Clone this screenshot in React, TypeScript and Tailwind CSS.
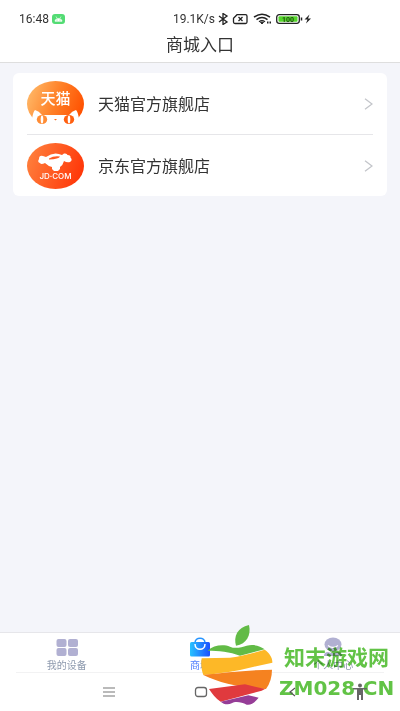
import React from "react";

const cjk = "font-['Noto_Sans','Noto_Sans_CJK_SC',sans-serif]";

function StatusBar() {
  return (
    <div className="flex h-[38px] items-center justify-between pl-[19px] pr-[85px] text-[12px] text-[#333] font-[Roboto,sans-serif]">
      <div className="flex items-center gap-[3px]">
        <span>16:48</span>
        <svg className="h-[10px] w-[13px]" viewBox="0 0 13 10" aria-hidden="true">
          <rect width="13" height="10" rx="3" fill="#53dc74" />
          <path d="M3 7.3C3 3.5 10 3.5 10 7.3ZM4 2.5l1 1.7M9 2.5L8 4.200" fill="#fff" stroke="#fff" strokeWidth=".6" />
          <circle cx="5" cy="5.900" r=".5" fill="#53dc74" />
          <circle cx="8" cy="5.900" r=".5" fill="#53dc74" />
        </svg>
      </div>
      <div className="flex items-center gap-[3px]">
        <span>19.1K/s</span>
        <svg className="h-[12px] w-[97px]" viewBox="0 0 97 12" fill="none" stroke="#222" aria-hidden="true">
          <path d="M1 3l8 6-4 2.500V.5L9 3 1 9" strokeWidth="1.300" />
          <path d="M19 1.700h8.500q1.500 0 1.500 1.500v5.800q0 1.500-1.500 1.500h-10.500q-1.500 0-1.500-1.500V5.200Z" strokeWidth="1.300" />
          <path d="M20.500 4l4 4M24.500 4l-4 4" strokeWidth="1.300" />
          <path d="M36 4.200q8-6 16 0M38.500 6.600q5.500-4 11 0" strokeWidth="1.500" />
          <path d="M41 8.800q3-2.200 6 0" strokeWidth="1.300" />
          <path d="M42.500 9.200h3L44 11Z" fill="#222" />
          <path d="M49 9.500h1.500M51.500 9.500h1.500" strokeWidth="2" />
          <rect x="58.700" y="1.700" width="22.600" height="8.600" rx="2.500" strokeWidth="1.300" />
          <rect x="60.500" y="3.300" width="19" height="5.400" rx="1" fill="#55d62b" stroke="none" />
          <path d="M83.500 4.500v3" strokeWidth="1.500" />
          <text x="70" y="8.700" textAnchor="middle" fontSize="7" fontWeight="700" fill="#205010" stroke="none">100</text>
          <path d="M91.500 1.500l-5 5h3l-1.500 4 5-5h-3Z" fill="#222" stroke="none" />
        </svg>
      </div>
    </div>
  );
}

function TmallLogo() {
  return (
    <svg className="h-[46px] w-[57px] shrink-0" viewBox="0 0 57 46" aria-hidden="true">
      <defs>
        <linearGradient id="tmall" x1="0" x2="1" y1=".3" y2=".6">
          <stop stopColor="#ffb766" />
          <stop offset=".5" stopColor="#ff8027" />
          <stop offset="1" stopColor="#ff5000" />
        </linearGradient>
      </defs>
      <ellipse cx="28.500" cy="23" rx="28.500" ry="23" fill="url(#tmall)" />
      <path d="M5 46V38Q6 31 8 29Q12 30 15 34H42Q45 30 49 29Q51 31 52 38V46Z" fill="#fff" />
      <ellipse cx="15" cy="38.500" rx="5.200" ry="4.500" fill="#ff8c35" />
      <ellipse cx="42" cy="38.500" rx="5.200" ry="4.500" fill="#ff5f10" />
      <ellipse cx="15" cy="38.500" rx="1.300" ry="4" fill="#fff" />
      <ellipse cx="42" cy="38.500" rx="1.300" ry="4" fill="#fff" />
      <path d="M27 38h3l-1.500 1.500Z" fill="#ff6a1a" />
      <text x="28.500" y="23" textAnchor="middle" fontSize="15" fontWeight="500" fill="#fff">天猫</text>
    </svg>
  );
}

function JdLogo() {
  return (
    <svg className="h-[46px] w-[57px] shrink-0" viewBox="0 0 57 46" aria-hidden="true">
      <defs>
        <linearGradient id="jd" x1="0" x2="1" y1=".3" y2=".6">
          <stop stopColor="#ff7f3c" />
          <stop offset="1" stopColor="#ff3608" />
        </linearGradient>
      </defs>
      <ellipse cx="28.500" cy="23" rx="28.500" ry="23" fill="url(#jd)" />
      <path d="M12 16Q12 12 16 13L19 14Q27 8 35 12L37 10.500Q40 10 40.500 12 44 12 43.500 14.500 46 17 43 19 40 20 37 18 36 22 33 24V26L31 28H27L25 26V24Q21 23 18 20 14 22 13 20 10 19 12 16Z" fill="#fff" />
      <path d="M22 15.500Q27 12.500 33 13.500 32 16 22 16.500Z" fill="#ff5b24" />
      <text x="28.500" y="36" textAnchor="middle" fontSize="8" fontWeight="500" fill="#fff" fontFamily="Inter, sans-serif">JD·COM</text>
    </svg>
  );
}

function StoreRow({ logo, name }: { logo: React.ReactNode; name: string }) {
  return (
    <button type="button" className="flex h-[61px] w-full items-center text-left">
      {logo}
      <span className="ml-[14px] flex-1 text-[16px] text-[#333]">{name}</span>
      <svg className="h-[12px] w-[9px]" viewBox="0 0 9 12" fill="none" stroke="#c3c5ca" strokeWidth="1.300" aria-hidden="true">
        <path d="M1 .8L8 6l-7 5.200" />
      </svg>
    </button>
  );
}

function Tab({ icon, label, active }: { icon: React.ReactNode; label: string; active?: boolean }) {
  return (
    <button type="button" className={`flex flex-1 flex-col items-center pt-1 text-[10px] leading-[16px] ${active ? "text-[#4d7cfe]" : "text-[#8e9aae]"}`}>
      {icon}
      {label}
    </button>
  );
}

function Watermark() {
  return (
    <div className="pointer-events-none absolute bottom-0 right-0 flex h-[91px] w-[220px]">
      <svg className="h-[91px] w-[99px] shrink-0" viewBox="0 0 297 273" aria-hidden="true">
        <path d="M168 77C160 50 172 22 207 15 214 45 200 72 168 77Z" fill="#62bb46" />
        <path d="M83 92C100 75 130 72 150 80 165 87 185 82 200 77 222 72 242 78 254 88L180 107C150 95 115 92 83 92Z" fill="#62bb46" />
        <path d="M65 115L150 113C190 108 225 98 254 89 270 100 278 115 277 128L180 150C140 158 105 162 70 165 64 150 62 130 65 115Z" fill="#fdb827" />
        <path d="M70 165C130 158 210 150 276 149 276 170 270 190 258 207 190 205 120 190 70 165Z" fill="#f58220" />
        <path d="M87 207L195 193 255 207 245 212C200 225 160 235 122 245 107 235 95 220 87 207Z" fill="#e03a3e" />
        <path d="M122 245L205 226 236 233C225 247 212 257 200 254 185 246 165 243 155 250 143 256 130 252 122 245Z" fill="#963d97" />
      </svg>
      <div className="flex flex-col pt-[22px] text-[#62c346] mix-blend-multiply">
        <span className="pl-[5px] text-[21px] font-bold leading-[30px]">知末游戏网</span>
        <span className="text-[20px] font-bold leading-[32px] font-['DejaVu_Sans',sans-serif]">ZM028.CN</span>
      </div>
    </div>
  );
}

export default function App() {
  return (
    <div className={`relative flex min-h-screen flex-col bg-[#f4f5fa] ${cjk}`}>
      <header className="border-b border-[#dedede] bg-white">
        <StatusBar />
        <h1 className="h-[24px] text-center text-[17px] leading-[14px] text-[#333]">商城入口</h1>
      </header>
      <main className="flex-1 px-[13px] pt-[10px]">
        <section className="rounded-md bg-white px-[14px]">
          <StoreRow logo={<TmallLogo />} name="天猫官方旗舰店" />
          <div className="h-px bg-[#e6e6e9]" />
          <StoreRow logo={<JdLogo />} name="京东官方旗舰店" />
        </section>
      </main>
      <footer className="border-t border-[#e6e6ea] bg-white">
        <nav className="flex h-[39px]">
          <Tab
            label="我的设备"
            icon={
              <svg className="h-[20px] w-[22px] shrink-0" viewBox="0 0 22 20" fill="#b1b0d2" aria-hidden="true">
                <rect x=".5" y="2" width="10" height="8" rx="2" />
                <rect x="12" y="2" width="10" height="8" rx="2" />
                <rect x=".5" y="11" width="10" height="8" rx="2" />
                <rect x="12" y="11" width="10" height="8" rx="2" />
              </svg>
            }
          />
          <Tab
            active
            label="商城"
            icon={
              <svg className="h-[20px] w-[22px] shrink-0" viewBox="0 0 22 20" fill="none" aria-hidden="true">
                <defs>
                  <linearGradient id="bag">
                    <stop stopColor="#28c2ff" />
                    <stop offset="1" stopColor="#1e50ff" />
                  </linearGradient>
                </defs>
                <path d="M6 6C6-.5 16-.5 16 6" stroke="#2694ff" strokeWidth="1.500" />
                <rect x="1" y="5" width="20" height="14.500" rx="1.500" fill="url(#bag)" />
                <path d="M6 7C6 14 16 14 16 7" stroke="#fff" strokeWidth="1.500" />
              </svg>
            }
          />
          <Tab
            label="个人中心"
            icon={
              <svg className="h-[20px] w-[22px] shrink-0" viewBox="0 0 22 20" aria-hidden="true">
                <ellipse cx="11" cy="7.500" rx="8.500" ry="7" fill="#b1b0d2" />
                <path d="M6 8.500q5 4 10 0" fill="none" stroke="#fff" strokeWidth="1.300" />
                <path d="M2 19q0-4 4-4 5 2 10 0 4 0 4 4Z" fill="#b1b0d2" />
              </svg>
            }
          />
        </nav>
        <div className="mx-4 h-px bg-[#f2f2f3]" />
        <div className="flex h-[38px] items-center pl-[102px] pr-[33px]">
          <div className="flex flex-1 items-center justify-between">
            <button type="button" aria-label="Menu">
              <svg className="h-[12px] w-[14px]" viewBox="0 0 14 12" stroke="#777" strokeWidth="1.200" aria-hidden="true">
                <path d="M1 2h12M1 6h12M1 10h12" />
              </svg>
            </button>
            <button type="button" aria-label="Home">
              <svg className="h-[12px] w-[14px]" viewBox="0 0 14 12" fill="none" stroke="#666" strokeWidth="1.300" aria-hidden="true">
                <rect x="1.500" y="1.500" width="11" height="9" rx="2.500" />
              </svg>
            </button>
            <button type="button" aria-label="Back" className="relative z-10">
              <svg className="h-[10px] w-[14px]" viewBox="0 0 14 10" fill="none" stroke="#555" strokeWidth="1.200" aria-hidden="true">
                <path d="M10 1L5 5l5 4" />
              </svg>
            </button>
          </div>
          <button type="button" aria-label="Accessibility" className="relative z-10 ml-[54px]">
            <svg className="h-[18px] w-[14px]" viewBox="0 0 14 18" fill="#666" aria-hidden="true">
              <circle cx="7" cy="2.500" r="2" />
              <path d="M0 5h14v1.500H10V17H8V12H6v5H4V6.500H0Z" />
            </svg>
          </button>
        </div>
      </footer>
      <Watermark />
    </div>
  );
}
